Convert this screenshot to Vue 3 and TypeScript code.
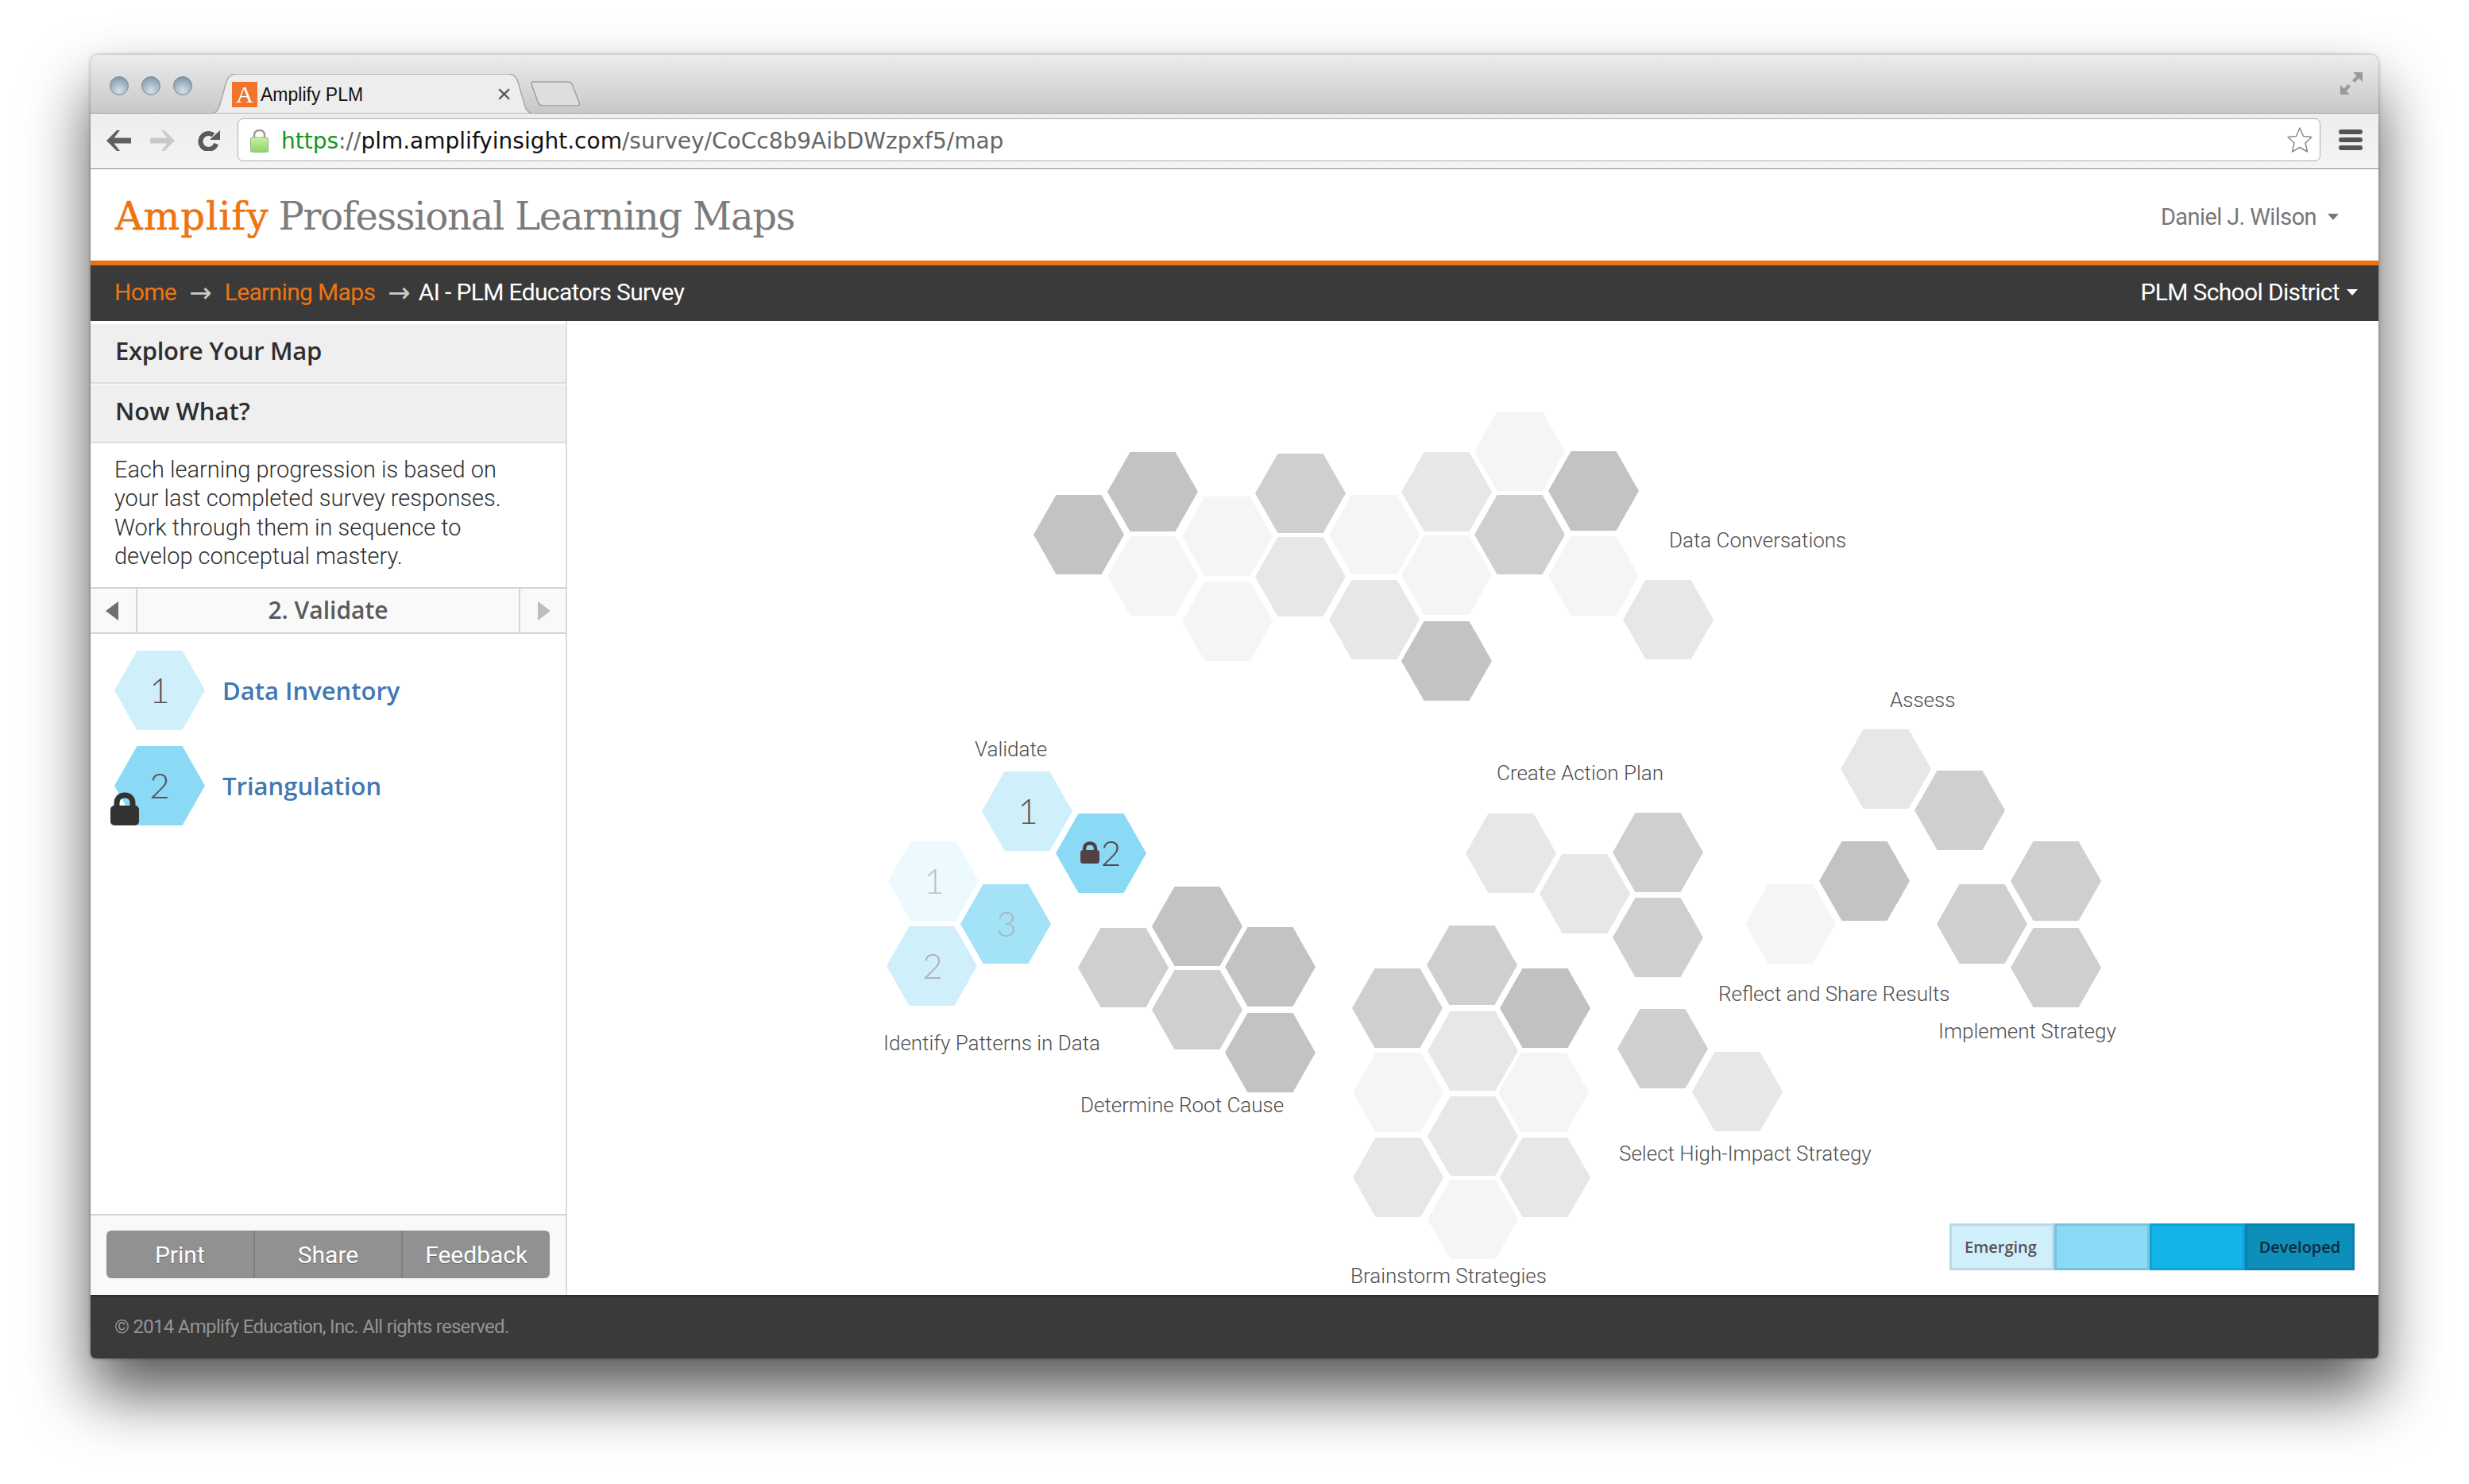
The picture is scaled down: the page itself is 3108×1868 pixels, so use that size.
<script setup lang="ts">
interface Hex { x: number; y: number; c: string }
interface Label { x: number; y: number; t: string }
const OX = 714
const OY = 404
const C3 = '#c3c3c3'
const CF = '#cfcfcf'
const E7 = '#e7e7e7'
const F5 = '#f5f5f5'
const greys: Hex[] = [
  { x: 1301, y: 623, c: C3 }, { x: 1394, y: 569, c: C3 }, { x: 1394, y: 675, c: F5 },
  { x: 1488, y: 625, c: F5 }, { x: 1488, y: 732, c: F5 }, { x: 1580, y: 571, c: CF },
  { x: 1580, y: 676, c: E7 }, { x: 1673, y: 623, c: F5 }, { x: 1673, y: 730, c: E7 },
  { x: 1764, y: 569, c: E7 }, { x: 1764, y: 674, c: F5 }, { x: 1764, y: 782, c: C3 },
  { x: 1856, y: 518, c: F5 }, { x: 1856, y: 623, c: CF }, { x: 1949, y: 568, c: C3 },
  { x: 1949, y: 675, c: F5 }, { x: 2043, y: 730, c: E7 },
  { x: 1357, y: 1168, c: CF }, { x: 1450, y: 1116, c: C3 }, { x: 1542, y: 1167, c: C3 },
  { x: 1450, y: 1221, c: CF }, { x: 1542, y: 1275, c: C3 },
  { x: 2317, y: 918, c: E7 }, { x: 2410, y: 970, c: CF },
  { x: 1845, y: 1024, c: E7 }, { x: 1938, y: 1075, c: E7 }, { x: 2030, y: 1023, c: CF }, { x: 2030, y: 1130, c: CF },
  { x: 2197, y: 1113, c: F5 }, { x: 2290, y: 1059, c: C3 },
  { x: 2438, y: 1113, c: CF }, { x: 2531, y: 1059, c: CF }, { x: 2531, y: 1168, c: CF },
  { x: 1796, y: 1165, c: CF }, { x: 1702, y: 1219, c: CF }, { x: 1888, y: 1219, c: '#c1c1c1' },
  { x: 1797, y: 1273, c: E7 }, { x: 1703, y: 1325, c: F5 }, { x: 1886, y: 1325, c: F5 },
  { x: 1797, y: 1380, c: E7 }, { x: 1703, y: 1432, c: E7 }, { x: 1888, y: 1432, c: E7 },
  { x: 1797, y: 1485, c: F5 },
  { x: 2036, y: 1270, c: CF }, { x: 2130, y: 1324, c: E7 }
]
const blues = [
  { x: 1236, y: 971, c: '#cff0fb', d: '1', tc: '#5b5055', lock: false },
  { x: 1329, y: 1024, c: '#8adaf6', d: '2', tc: '#524a50', lock: true },
  { x: 1118, y: 1059, c: '#ecf9fe', d: '1', tc: '#c3bfc3', lock: false },
  { x: 1209, y: 1113, c: '#a3e2f7', d: '3', tc: '#a9b8c4', lock: false },
  { x: 1116, y: 1166, c: '#cff0fb', d: '2', tc: '#aeb2bb', lock: false }
]
const labels: Label[] = [
  { x: 2101, y: 680, t: 'Data Conversations' },
  { x: 1227, y: 943, t: 'Validate' },
  { x: 1112, y: 1313, t: 'Identify Patterns in Data' },
  { x: 1360, y: 1391, t: 'Determine Root Cause' },
  { x: 2379, y: 881, t: 'Assess' },
  { x: 1884, y: 973, t: 'Create Action Plan' },
  { x: 2163, y: 1251, t: 'Reflect and Share Results' },
  { x: 2440, y: 1298, t: 'Implement Strategy' },
  { x: 2038, y: 1452, t: 'Select High-Impact Strategy' },
  { x: 1700, y: 1606, t: 'Brainstorm Strategies' }
]
function pos(x: number, y: number) {
  return { left: `${x - OX}px`, top: `${y - OY}px` }
}
</script>

<template>
  <div class="page">
    <div class="window">
      <div class="tabstrip">
        <div class="lights"><i></i><i></i><i></i></div>
        <div class="tab">
          <svg class="tab-bg" width="411" height="50" viewBox="0 0 411 50">
            <path d="M0 50C9 50 12 46 14 38L22 10C24 3 28 0 35 0H376C383 0 387 3 389 10L397 38C399 46 402 50 411 50Z" fill="#ededed" stroke="#a8a8a8" stroke-width="1.5"/>
          </svg>
          <span class="favicon">A</span>
          <span class="tab-title">Amplify PLM</span>
          <span class="tab-close">×</span>
        </div>
        <svg class="newtab" width="63" height="32" viewBox="0 0 63 32">
          <path d="M2 1H46C50 1 52 3 53 6L61 27C62 30 61 31 58 31H16C12 31 10 29 9 26L1 4C0.5 2 1 1 2 1Z" fill="#dedede" stroke="#a0a0a0" stroke-width="1.5"/>
        </svg>
        <svg class="expand" width="28" height="28" viewBox="0 0 28 28">
          <path d="M28 0V12L23.5 7.5L18 13L15 10L20.500 4.500L16 0Z M0 28V16L4.500 20.500L10 15L13 18L7.500 23.500L12 28Z" fill="#9a9a9a"/>
        </svg>
      </div>
      <div class="toolbar">
        <svg class="nav-ic" width="31" height="26" viewBox="0 0 31 26">
          <path d="M13 0L0 13L13 26H17L9.500 16.500H31V9.500H9.500L17 0Z" fill="#5f5f5f"/>
        </svg>
        <svg class="nav-ic fwd" width="31" height="26" viewBox="0 0 31 26">
          <path d="M18 0L31 13L18 26H14L21.500 16.500H0V9.500H21.500L14 0Z" fill="#c9c9c9"/>
        </svg>
        <svg class="nav-ic rel" width="29" height="26" viewBox="0 0 29 26">
          <path d="M24 17A10 10 0 1 1 20.500 6" fill="none" stroke="#5a5a5a" stroke-width="6"/>
          <path d="M16 12H29V0Z" fill="#5a5a5a"/>
        </svg>
        <div class="address">
          <svg class="padlock" width="23" height="29" viewBox="0 0 23 29">
            <defs>
              <linearGradient id="lockfill" x1="0" y1="0" x2="0" y2="1">
                <stop offset="0" stop-color="#c8efa8"/>
                <stop offset="1" stop-color="#8fd568"/>
              </linearGradient>
            </defs>
            <path d="M5 11V7C5 3 8 1 11.500 1S18 3 18 7V11" fill="none" stroke="#9a9a9a" stroke-width="2.500"/>
            <rect x="0.500" y="10" width="22" height="18.500" rx="2" fill="url(#lockfill)" stroke="#8fb87a"/>
          </svg>
          <span class="url"><span class="g">https</span><span class="m">://</span><span class="k">plm.amplifyinsight.com</span><span class="m">/survey/CoCc8b9AibDWzpxf5/map</span></span>
          <svg class="star" width="34" height="34" viewBox="0 0 34 34">
            <path d="M17 2L21.500 12.500L32 13.500L24 21L26.500 32L17 26.500L7.500 32L10 21L2 13.500L12.500 12.500Z" fill="#fff" stroke="#8a8a8a" stroke-width="1.500" stroke-linejoin="round"/>
          </svg>
        </div>
        <div class="burger"><i></i><i></i><i></i></div>
      </div>
      <header class="header">
        <div class="brand"><span class="amp">Amplify</span><span class="plm">Professional Learning Maps</span></div>
        <div class="user">Daniel J. Wilson<i class="caret grey"></i></div>
      </header>
      <nav class="crumbs">
        <div class="trail">
          <a class="o">Home</a><span class="arrow a1">→</span><a class="o">Learning Maps</a><span class="arrow a2">→</span><span>AI - PLM Educators Survey</span>
        </div>
        <div class="district">PLM School District<i class="caret white"></i></div>
      </nav>
      <main class="main">
        <aside class="sidebar">
          <h3 class="acc first">Explore Your Map</h3>
          <h3 class="acc second">Now What?</h3>
          <p class="desc">Each learning progression is based on<br>your last completed survey responses.<br>Work through them in sequence to<br>develop conceptual mastery.</p>
          <div class="stepper">
            <div class="st-btn left"><i class="tri-l"></i></div>
            <div class="st-name">2. Validate</div>
            <div class="st-btn right"><i class="tri-r"></i></div>
          </div>
          <ul class="steps">
            <li class="step">
              <div class="bighex pale"><span>1</span></div>
              <a>Data Inventory</a>
            </li>
            <li class="step">
              <div class="bigwrap">
                <div class="bighex sky"><span>2</span></div>
                <svg class="biglock" width="36" height="42" viewBox="0 0 36 42">
                  <path d="M8 19V14C8 8 12 4 18 4S28 8 28 14V19" fill="none" stroke="#333" stroke-width="7"/>
                  <rect x="0" y="17" width="36" height="25" rx="5" fill="#333"/>
                </svg>
              </div>
              <a>Triangulation</a>
            </li>
          </ul>
          <div class="actions">
            <div class="btns"><button>Print</button><button>Share</button><button>Feedback</button></div>
          </div>
        </aside>
        <section class="map">
          <div v-for="(h, i) in greys" :key="'g' + i" class="hex" :style="{ ...pos(h.x, h.y), background: h.c }"></div>
          <div v-for="(h, i) in blues" :key="'b' + i" class="hex num" :style="{ ...pos(h.x, h.y), background: h.c, color: h.tc }">
            <svg v-if="h.lock" class="inlock" width="24" height="28" viewBox="0 0 24 28">
              <path d="M5 13V9C5 5 8 2.500 12 2.500S19 5 19 9V13" fill="none" stroke="#524143" stroke-width="4.500"/>
              <rect y="11" width="24" height="17" rx="3.500" fill="#524143"/>
            </svg>
            <span>{{ h.d }}</span>
          </div>
          <span v-for="l in labels" :key="l.t" class="lbl" :style="pos(l.x, l.y - 20)">{{ l.t }}</span>
          <div class="legend">
            <div class="lg l1">Emerging</div>
            <div class="lg l2"></div>
            <div class="lg l3"></div>
            <div class="lg l4">Developed</div>
          </div>
        </section>
      </main>
      <footer class="footer">© 2014 Amplify Education, Inc. All rights reserved.</footer>
    </div>
  </div>
</template>

<style>
html, body { margin: 0; background: #fff; }
</style>

<style scoped>
* { box-sizing: border-box; }
.page {
  width: 3108px; height: 1868px; padding: 69px 114px 158px;
  font-family: Roboto, "Liberation Sans", sans-serif; overflow: hidden;
}
.window {
  height: 1641px; display: flex; flex-direction: column; background: #fff;
  border-radius: 10px 10px 6px 6px;
  box-shadow: 0 44px 80px rgba(0,0,0,.66), 0 0 4px rgba(0,0,0,.35);
}
.tabstrip {
  height: 74px; flex: none; display: flex; align-items: center; padding-left: 24px;
  border-radius: 10px 10px 0 0; border-bottom: 1px solid #9a9a9a;
  background: linear-gradient(#ececec, #c8c8c8);
}
.lights { display: flex; gap: 16px; margin-top: 4px; }
.lights i {
  width: 24px; height: 24px; border-radius: 50%; display: block;
  background: radial-gradient(circle at 50% 78%, #d4e0e8, #9db2c1 55%, #71879a); border: 1px solid #7b8a95;
}
.tab {
  position: relative; width: 411px; height: 50px; align-self: flex-end; margin: 0 0 -1px 21px;
  display: flex; align-items: center; padding: 0 30px 0 29px;
}
.tab-bg { position: absolute; left: 0; top: 0; }
.favicon {
  position: relative; width: 32px; height: 32px; background: #f0742a; color: #fff;
  font: 30px/32px "Liberation Serif", serif; text-align: center; margin-top: 2px;
}
.tab-title {
  position: relative; margin-left: 4px; font: 23px "Liberation Sans", sans-serif; color: #111; margin-top: 2px;
  flex: 1;
}
.tab-close { position: relative; font: 32px/32px "Liberation Sans", sans-serif; color: #555; }
.newtab { margin: 33px 0 0 -6px; align-self: flex-start; }
.expand { margin: -2px 20px 0 auto; }
.toolbar {
  height: 70px; flex: none; display: flex; align-items: center; padding: 0 20px;
  background: linear-gradient(#ededed, #f4f4f4); border-bottom: 1px solid #8c8c8c;
}
.nav-ic { flex: none; margin-top: -1px; }
.fwd { margin-left: 24px; }
.rel { margin-left: 28px; }
.address {
  flex: 1; height: 54px; margin: -3px 23px 0 22px; display: flex; align-items: center; padding: 0 8px 0 15px;
  background: #fff; border: 1px solid #aeaeae; border-radius: 7px;
}
.padlock { flex: none; margin-top: 2px; }
.url { margin: 2px 0 0 16px; font: 28px "DejaVu Sans", sans-serif; white-space: nowrap; }
.g { color: #17951a; }
.m { color: #666; }
.k { color: #111; }
.star { margin-left: auto; }
.burger { width: 30px; display: flex; flex-direction: column; gap: 4px; margin-top: -3px; }
.burger i { display: block; height: 6px; border-radius: 3px; background: #555; }
.header {
  height: 121px; flex: none; display: flex; align-items: center; justify-content: space-between;
  padding: 0 50px 0 31px; border-bottom: 6px solid #ec7211;
}
.brand { font-family: "DejaVu Serif", serif; font-size: 48px; white-space: nowrap; display: flex; margin-top: 3px; }
.amp { color: #ee7410; letter-spacing: 1px; -webkit-text-stroke: .6px #ee7410; }
.plm { color: #7b7b7b; letter-spacing: -1.25px; margin-left: 12px; }
.user { font-size: 29px; color: #777; display: flex; align-items: center; letter-spacing: -.6px; margin-top: 5px; }
.caret { display: block; border-style: solid; border-color: transparent; border-width: 8px 7.500px 0; }
.grey { border-top-color: #777; margin-left: 14px; }
.white { border-top-color: #fff; margin-left: 9px; }
.crumbs {
  height: 70px; flex: none; display: flex; align-items: center; justify-content: space-between;
  padding: 0 26px 3px 30px; background: #3a3a3a; color: #fff; font-size: 30px; white-space: nowrap; letter-spacing: -.65px;
}
.trail { display: flex; align-items: center; }
.o { color: #ee7410; }
.arrow { color: #ccc; font-family: "DejaVu Sans", sans-serif; font-size: 34px; line-height: 36px; letter-spacing: 0; }
.a1 { margin: 0 16px; }
.a2 { margin: 0 10px 0 16px; }
.district { display: flex; align-items: center; }
.main { flex: 1; display: flex; min-height: 0; }
.sidebar {
  width: 600px; flex: none; display: flex; flex-direction: column; border-right: 2px solid #dcdcdc; padding-top: 4px;
}
.acc {
  margin: 0; height: 75px; flex: none; display: flex; align-items: center; padding: 0 0 7px 31px;
  background: #efefef; border-bottom: 2px solid #dcdcdc; font: 600 31px "Open Sans", sans-serif; letter-spacing: -.3px; color: #2e2e2e;
}
.first { margin-bottom: 1px; }
.second { height: 74px; padding-bottom: 6px; letter-spacing: 0; }
.desc {
  margin: 0; height: 181px; flex: none; padding: 15px 0 0 30px; font-size: 29px; font-weight: 300; line-height: 36.300px; color: #2f2f2f;
}
.stepper {
  height: 59px; flex: none; display: flex; background: #f9f9f9; border-top: 2px solid #d4d4d4; border-bottom: 2px solid #d4d4d4;
}
.st-btn { width: 59px; flex: none; display: flex; align-items: center; justify-content: center; }
.left { border-right: 2px solid #d4d4d4; }
.right { border-left: 2px solid #d4d4d4; }
.tri-l { border-style: solid; border-color: transparent #6f6f74 transparent transparent; border-width: 12px 16px 12px 0; margin-right: 4px; }
.tri-r { border-style: solid; border-color: transparent transparent transparent #bdbdbd; border-width: 12px 0 12px 16px; margin-left: 2px; }
.st-name { flex: 1; text-align: center; font: 600 30px/54px "Open Sans", sans-serif; color: #5a5a5a; }
.steps { list-style: none; margin: 0; padding: 21px 0 0 30px; flex: 1; display: flex; flex-direction: column; gap: 20px; }
.step { display: flex; align-items: center; gap: 22px; }
.step a { font: 600 31px "Open Sans", sans-serif; color: #3f78b3; }
.bigwrap { position: relative; width: 114px; height: 100px; }
.bighex {
  width: 114px; height: 100px; display: flex; align-items: center; justify-content: center; padding-bottom: 3px;
  clip-path: polygon(25% 0, 75% 0, 100% 50%, 75% 100%, 25% 100%, 0 50%);
  font: 300 44px Lato, sans-serif; color: #5b5055;
}
.pale { background: #cff0fb; }
.sky { background: #8adaf6; }
.biglock { position: absolute; left: -5px; bottom: 0; }
.actions {
  height: 102px; flex: none; background: #f9f9f9; border-top: 2px solid #d4d4d4; padding: 19px 20px 0;
}
.btns { display: flex; height: 60px; border-radius: 6px; overflow: hidden; background: #919191; }
.btns button {
  flex: 1; border: 0; background: none; color: #fff; font: 30px Roboto, sans-serif; padding: 0;
  border-left: 2px solid #7f7f7f; text-shadow: 0 1px 1px rgba(0,0,0,.35);
}
.btns button:first-child { border-left: 0; }
.map { flex: 1; position: relative; overflow: hidden; }
.hex {
  position: absolute; width: 114px; height: 100px;
  clip-path: polygon(25% 0, 75% 0, 100% 50%, 75% 100%, 25% 100%, 0 50%);
}
.num { display: flex; align-items: center; justify-content: center; font: 300 44px Lato, sans-serif; padding: 0 0 2px 2px; }
.inlock { margin: 0 2px 0 -3px; }
.lbl { position: absolute; font-size: 26px; font-weight: 300; line-height: 40px; color: #4f4f4f; white-space: nowrap; }
.legend { position: absolute; left: 1740px; top: 1136px; width: 510px; height: 59px; display: flex; }
.lg {
  height: 59px; display: flex; align-items: center; justify-content: center;
  font: 600 20px "Open Sans", sans-serif; border: 3px solid;
}
.l1 { width: 132px; padding-right: 3px; background: #cff0fb; border-color: #b5dbe8; color: #5b5055; }
.l2 { width: 120px; background: #8adaf6; border-color: #78c2dc; }
.l3 { width: 120px; background: #14b4ea; border-color: #10a2d4; }
.l4 { width: 138px; background: #0e8fba; border-color: #0c80a8; color: #0e2a3c; }
.footer {
  height: 80px; flex: none; display: flex; align-items: center; padding: 0 0 3px 30px;
  background: #3a3a3a; border-top: 2px solid #2d2d2d; border-radius: 0 0 6px 6px;
  color: #949494; font-size: 24px; letter-spacing: -.7px;
}
</style>
